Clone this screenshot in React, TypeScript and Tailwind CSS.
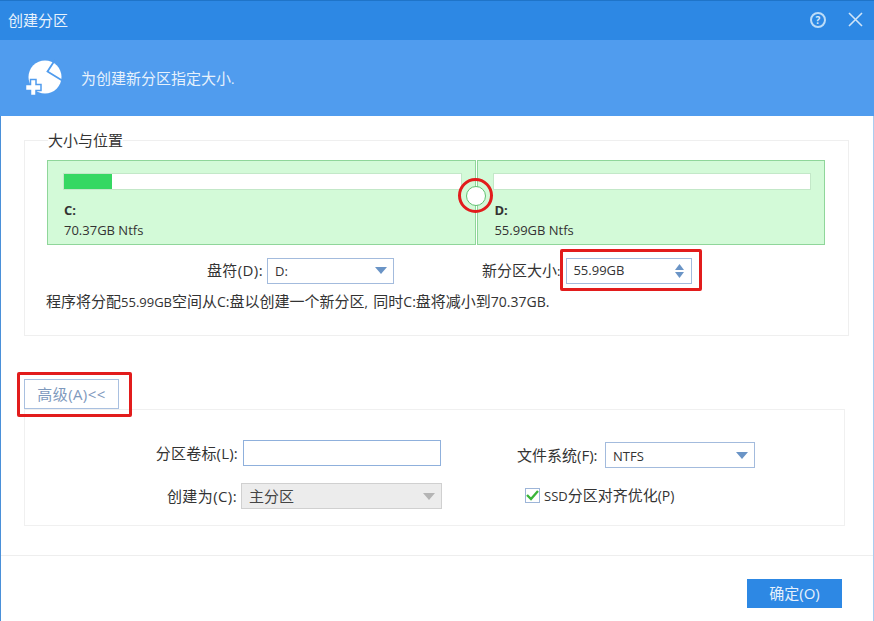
const FONT = "[font-family:'Open_Sans','Noto_Sans_CJK_SC',sans-serif]";

// latin runs sit about 2px smaller than the CJK text in the original
const L = ({ children }: { children: React.ReactNode }) => <span className="text-[13px]">{children}</span>;
const M = ({ children }: { children: React.ReactNode }) => <span className="text-[14px]">{children}</span>;

const Arrow = ({ color }: { color: string }) => (
  <svg width="12" height="7" viewBox="0 0 12 7">
    <path d="M0 0h12L6 7z" fill={color} />
  </svg>
);

const Select = ({ value, className, disabled }: { value: React.ReactNode; className: string; disabled?: boolean }) => (
  <div
    className={`flex items-center justify-between border pl-[7px] pr-[6px] ${
      disabled ? "border-[#d0d0d0] bg-[#ececec] text-[#444]" : "border-[#a3bbdd] bg-white text-[#333]"
    } ${className}`}
  >
    <span>{value}</span>
    <Arrow color={disabled ? "#b4b4b4" : "#6a94c6"} />
  </div>
);

const PartitionCard = ({
  letter,
  size,
  fill,
  className,
  textClass,
}: {
  letter: string;
  size: string;
  fill?: number;
  className: string;
  textClass: string;
}) => (
  <div className={`h-[85px] border border-[#8fd69a] bg-[#d3fad8] pl-[15px] pr-[13px] ${className}`}>
    <div className="mt-3 h-[17px] border border-[#c3e8c8] bg-white">
      {fill ? <div className="h-full bg-[#35d862]" style={{ width: fill }} /> : null}
    </div>
    <div className={`mt-[11px] text-[13px] font-bold leading-[18px] text-[#333] ${textClass}`}>{letter}</div>
    <div className={`mt-[2px] text-[13px] leading-[18px] text-[#333] ${textClass}`}>{size}</div>
  </div>
);

export default function App() {
  return (
    <div className={`flex h-[621px] w-[874px] flex-col overflow-hidden bg-white ${FONT}`}>
      {/* Title bar */}
      <div className="flex h-10 items-center justify-between border-t border-[#1f74c8] bg-[#2d88e4] pl-2 pr-[10px]">
        <span className="text-[15px] text-[#e8f2fc]">创建分区</span>
        <div className="mb-[2px] flex items-center gap-[22px]">
          <div className="flex h-4 w-4 items-center justify-center rounded-full border-2 border-[#bcdcf8] text-[10px] font-bold leading-none text-[#d8ebfb]">
            ?
          </div>
          <svg width="15" height="15" viewBox="0 0 15 15" className="mr-[1px]">
            <path d="M1 1l13 13M14 1L1 14" stroke="#cfe4f8" strokeWidth="1.6" fill="none" />
          </svg>
        </div>
      </div>

      {/* Banner */}
      <div className="flex h-[76px] items-center bg-[#509cee] pl-[25px]">
        <svg width="38" height="38" viewBox="0 0 38 38">
          <circle cx="20" cy="18" r="16.5" fill="#fff" />
          <path d="M30 1L22.5 12.5 38 22" stroke="#509cee" strokeWidth="1.8" fill="none" />
          <path d="M5.5 20.5h5.500v5h5v6h-5v5H5.500v-5h-5v-6h5z" fill="#fff" stroke="#509cee" strokeWidth="1.5" />
        </svg>
        <span className="ml-[18px] text-[15px] text-[#e6f1fc]">
          为创建新分区指定大小<L>.</L>
        </span>
      </div>

      {/* Body */}
      <div className="flex flex-1 flex-col border-l border-r border-l-[#4a90d9] border-r-[#a9cdf0]">
        <fieldset className="ml-[23px] mt-[15px] h-[205px] w-[825px] border border-[#efefef] pl-[22px]">
          <legend className="ml-[1px] text-[15px] leading-[18px] text-[#333]">大小与位置</legend>

          <div className="relative mt-[11px] flex w-[778px] gap-px">
            <PartitionCard letter="C:" size="70.37GB Ntfs" fill={48} className="w-[430px]" textClass="ml-[1px]" />
            <PartitionCard letter="D:" size="55.99GB Ntfs" className="w-[348px]" textClass="ml-[1px]" />
            <div className="absolute left-[411px] top-[18px] flex h-[35px] w-[35px] items-center justify-center rounded-full border-[3px] border-[#e21c1c]">
              <div className="h-[20px] w-[20px] rounded-full border border-[#62c072] bg-white" />
            </div>
          </div>

          <div className="mt-[12px] flex h-[27px] items-center text-[15px] text-[#333]">
            <span className="ml-[159px] w-[57px] whitespace-nowrap text-right tracking-[0.4px]">盘符(D):</span>
            <Select value={<L>D:</L>} className="ml-[4px] h-[26px] w-[127px]" />
            <span className="ml-[88px] whitespace-nowrap">
              新分区大小<L>:</L>
            </span>
            <div className="relative ml-[6px] flex h-[26px] w-[126px] items-center justify-between border border-[#a3bbdd] pl-[6px] pr-[7px]">
              <L>55.99GB</L>
              <div className="flex flex-col gap-[2px]">
                <svg width="9" height="6" viewBox="0 0 9 6"><path d="M0 6h9L4.500 0z" fill="#6a94c6" /></svg>
                <svg width="9" height="6" viewBox="0 0 9 6"><path d="M0 0h9L4.500 6z" fill="#6a94c6" /></svg>
              </div>
              <div className="absolute -bottom-[8px] -left-[7px] -right-[11px] -top-[10px] rounded-[2px] border-[3px] border-[#e21c1c]" />
            </div>
          </div>

          <div className="-ml-[1px] mt-[4px] whitespace-nowrap text-[15px] leading-[26px] text-[#333]">
            程序将分配<L>55.99GB</L>空间从<M>C:</M>盘以创建一个新分区<span className="pr-[2px] text-[13px]">, </span>同时<M>C:</M>盘将减小到<M>70.37GB.</M>
          </div>
        </fieldset>

        {/* Advanced */}
        <div className="relative ml-[23px] mt-[43px] flex h-[30px] w-[95px] items-center justify-center border border-[#a9c0e0] text-[15px] text-[#7e99bd]">
          <span className="tracking-[0.4px]">高级(A)&lt;&lt;</span>
          <div className="absolute -bottom-[9px] -left-[8px] -right-[14px] -top-[8px] rounded-[2px] border-[3px] border-[#e21c1c]" />
        </div>

        <div className="ml-[23px] h-[117px] w-[821px] border border-[#f0f0f0] text-[15px] text-[#333]">
          <div className="flex h-full">
            <div className="ml-[130px] mt-[30px] flex w-[287px] flex-col gap-[17px]">
              <div className="flex h-[26px] items-center justify-end">
                <span className="whitespace-nowrap tracking-[0.2px]">分区卷标(L):</span>
                <div className="ml-[5px] mr-[1px] h-[26px] w-[198px] border border-[#8fb0dc]" />
              </div>
              <div className="flex h-[26px] items-center justify-end">
                <span className="whitespace-nowrap tracking-[0.4px]">创建为(C):</span>
                <Select value="主分区" disabled className="ml-[4px] h-[26px] w-[201px]" />
              </div>
            </div>
            <div className="ml-[75px] mt-[32px] flex flex-col gap-[14px]">
              <div className="flex h-[26px] items-center">
                <span className="w-[83px] whitespace-nowrap">文件系统(F):</span>
                <Select value={<L>NTFS</L>} className="ml-[5px] h-[26px] w-[150px]" />
              </div>
              <div className="ml-[8px] flex h-[26px] items-center gap-[4px]">
                <div className="flex h-[15px] w-[15px] items-center justify-center border border-[#9db5d8] bg-white">
                  <svg width="13" height="11" viewBox="0 0 13 11">
                    <path d="M1 5l4 4 7-8" stroke="#3ab53a" strokeWidth="2.4" fill="none" />
                  </svg>
                </div>
                <span className="whitespace-nowrap">
                  <L>SSD</L>分区对齐优化<M>(P)</M>
                </span>
              </div>
            </div>
          </div>
        </div>

        {/* Footer */}
        <div className="mt-[29px] flex flex-1 items-start justify-end border-t border-[#eeeeee] pr-[31px] pt-[23px]">
          <button className="flex h-[29px] w-[95px] items-center justify-center bg-[#2d88e4] text-[15px] text-[#e6f1fc]">
            <span>确定(O)</span>
          </button>
        </div>
      </div>
    </div>
  );
}
